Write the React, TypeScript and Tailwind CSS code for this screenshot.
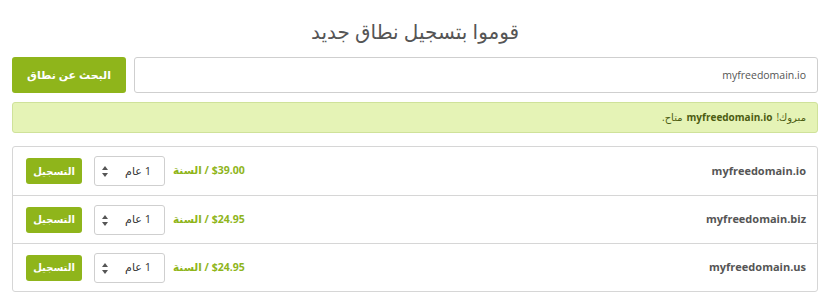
import { useState } from 'react';

const DOMAINS = [
  { name: 'myfreedomain.io', price: '$39.00' },
  { name: 'myfreedomain.biz', price: '$24.95' },
  { name: 'myfreedomain.us', price: '$24.95' },
];

function YearSelect() {
  return (
    <div className="relative flex h-[30px] w-[71px] items-center rounded-[3px] border border-[#cfcfcf] bg-white pr-[13px] text-[11px] text-[#333]">
      <span>1 عام</span>
      <svg className="absolute left-[7px] top-[9px]" width="6" height="11" viewBox="0 0 6 11">
        <path d="M3 0 L6 4 L0 4 Z" fill="#555" />
        <path d="M0 7 L6 7 L3 11 Z" fill="#555" />
      </svg>
    </div>
  );
}

export default function App() {
  const [query, setQuery] = useState('myfreedomain.io');

  return (
    <div dir="rtl" className="w-[830px] bg-white px-[12px] pt-[18px] font-['Open_Sans','DejaVu_Sans',sans-serif] text-[#555]">
      <h1 className="mb-[11px] text-center text-[20px] leading-[28px] text-[#555]">قوموا بتسجيل نطاق جديد</h1>

      <div className="flex gap-[8px]">
        <input
          value={query}
          onChange={(e) => setQuery(e.target.value)}
          className="h-[36px] flex-1 rounded-[3px] border border-[#cfcfcf] px-[11px] text-[10.5px] text-[#555] outline-none"
        />
        <button className="h-[36px] w-[114px] rounded-[3px] bg-[#8fb51b] text-[11px] font-bold text-white">
          البحث عن نطاق
        </button>
      </div>

      <div className="mt-[9px] flex h-[31px] items-center rounded-[3px] border border-[#cfe29a] bg-[#e5f3b6] px-[11px] text-[10px] text-[#4c5c12]">
        <span>مبروك!</span>
        <span className="mx-[4px] text-[10px] font-bold">myfreedomain.io</span>
        <span>متاح.</span>
      </div>

      <div className="mt-[13px] rounded-[3px] border border-[#d6d6d6]">
        {DOMAINS.map((d, i) => (
          <div
            key={d.name}
            className={`flex h-[48px] items-center justify-between pl-[13px] pr-[11px] ${i > 0 ? 'border-t border-[#d6d6d6]' : ''}`}
          >
            <span className="text-[11px] font-bold text-[#555]">{d.name}</span>
            <div className="flex items-center">
              <span className="text-[10.5px] font-bold text-[#8fb51b]">
                <span dir="ltr">{d.price}</span> / السنة
              </span>
              <div className="mr-[8px]">
                <YearSelect />
              </div>
              <button className="mr-[12px] h-[26px] w-[56px] rounded-[3px] bg-[#8fb51b] text-[10px] font-bold text-white">
                التسجيل
              </button>
            </div>
          </div>
        ))}
      </div>
    </div>
  );
}
